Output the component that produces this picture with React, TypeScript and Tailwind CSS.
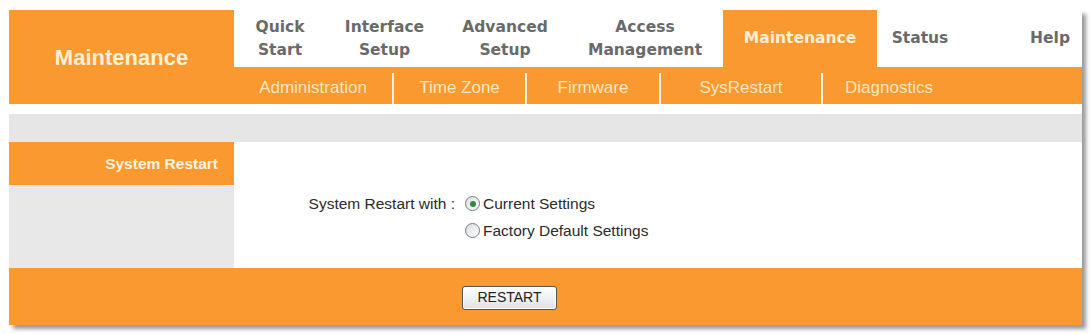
const tabs = [
  { label: ["Quick", "Start"], w: "w-[92px]" },
  { label: ["Interface", "Setup"], w: "w-[117px]" },
  { label: ["Advanced", "Setup"], w: "w-[124px]" },
  { label: ["Access", "Management"], w: "w-[156px]" },
];

const subItems = [
  { label: "Administration", w: "w-[158px]" },
  { label: "Time Zone", w: "w-[131px]" },
  { label: "Firmware", w: "w-[132px]" },
  { label: "SysRestart", w: "w-[160px]" },
  { label: "Diagnostics", w: "w-[132px]" },
];

function Radio({ checked }: { checked?: boolean }) {
  return (
    <span className="flex h-[15px] w-[15px] items-center justify-center rounded-full border border-[#6f7b86] bg-gradient-to-br from-[#dcdcdc] to-white">
      {checked && <span className="h-[6px] w-[6px] rounded-full bg-[#2e8b3d]" />}
    </span>
  );
}

export default function App() {
  return (
    <div className="min-h-[334px] bg-white pl-[9px] pt-[10px]">
      <div className="w-[1073px] shadow-[4px_4px_4px_rgba(0,0,0,0.4)] bg-white">
        {/* header */}
        <div className="flex h-[94px]">
          <div className="flex w-[225px] items-center justify-center bg-[#f9992f] font-['Liberation_Sans',sans-serif] text-[22px] font-bold text-[#fdf0d6]">
            Maintenance
          </div>
          <div className="flex flex-1 flex-col">
            <div className="flex h-[57px] font-['DejaVu_Sans',sans-serif] text-[15.5px] font-bold leading-[23px] text-[#6a6a6a]">
              {tabs.map((t) => (
                <div key={t.label[0]} className={`${t.w} flex flex-col items-center justify-center pt-[1px]`}>
                  <span>{t.label[0]}</span>
                  <span>{t.label[1]}</span>
                </div>
              ))}
              <div className="flex w-[154px] items-center justify-center bg-[#f9992f] text-[#fdf0d6]">
                Maintenance
              </div>
              <div className="flex w-[86px] items-center justify-center">Status</div>
              <div className="flex flex-1 items-center justify-end pr-[12px]">Help</div>
            </div>
            <div className="flex h-[37px] bg-[#f9992f] font-['Liberation_Sans',sans-serif] text-[17px] text-[#fde6c0]">
              {subItems.map((s, i) => (
                <div key={s.label} className="flex items-end">
                  {i > 0 && <div className="h-[31px] w-[2px] bg-[#fdf3e0]" />}
                  <div className={`${s.w} flex h-full items-center justify-center pt-[5px]`}>{s.label}</div>
                </div>
              ))}
            </div>
          </div>
        </div>

        <div className="h-[10px] bg-white" />
        <div className="h-[28px] bg-[#e6e6e6]" />

        {/* body */}
        <div className="flex h-[126px] font-['Liberation_Sans',sans-serif]">
          <div className="flex w-[225px] flex-col">
            <div className="flex h-[43px] items-center justify-end bg-[#f9992f] pr-[16px] text-[15.5px] font-bold text-[#fdf3e0]">
              System Restart
            </div>
            <div className="flex-1 bg-[#e8e8e8]" />
          </div>
          <div className="flex flex-1 pt-[48px] text-[15.5px] text-[#2b2b2b]">
            <div className="w-[221px] h-[27px] flex items-center justify-end">System Restart with :</div>
            <div className="flex flex-col pl-[10px]">
              <label className="flex h-[27px] items-center gap-[3px]">
                <Radio checked />
                <span>Current Settings</span>
              </label>
              <label className="flex h-[27px] items-center gap-[3px]">
                <Radio />
                <span>Factory Default Settings</span>
              </label>
            </div>
          </div>
        </div>

        {/* footer */}
        <div className="flex h-[57px] items-center bg-[#f9992f] pl-[453px] pt-[2px]">
          <button className="h-[24px] w-[95px] rounded-[3px] border border-[#555] bg-gradient-to-b from-white to-[#dfe3e6] font-['Liberation_Sans',sans-serif] text-[14px] text-[#222] shadow-[inset_0_0_0_1px_#fff]">
            RESTART
          </button>
        </div>
      </div>
    </div>
  );
}
